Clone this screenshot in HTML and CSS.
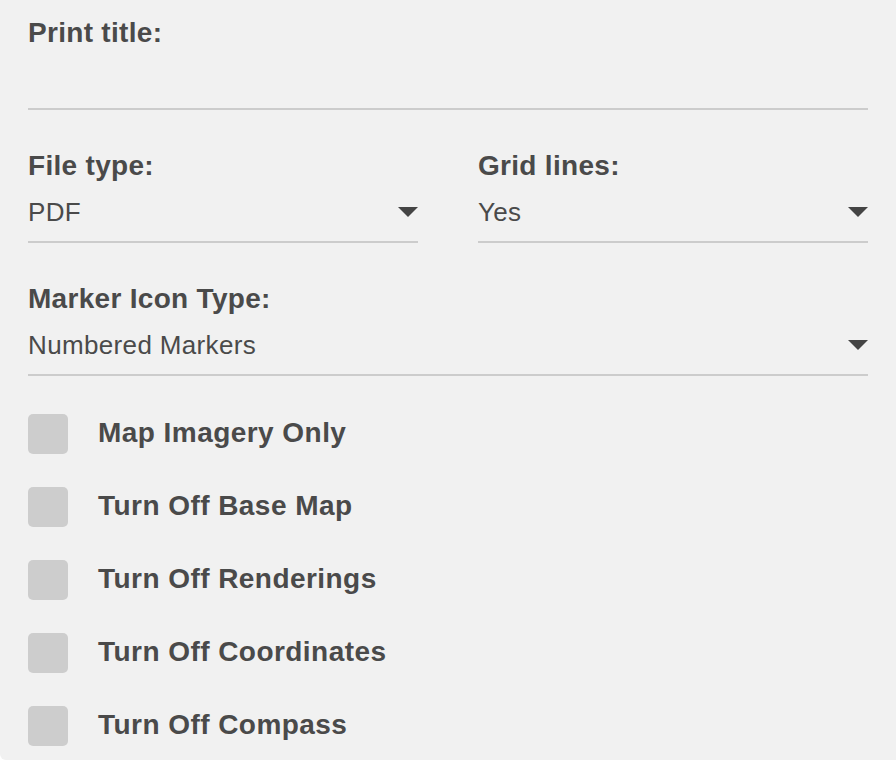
FILE: index.html
```html
<!DOCTYPE html>
<html lang="en">
<head>
<meta charset="utf-8">
<title>Print options</title>
<link rel="stylesheet" href="styles.css">
</head>
<body>
<div class="panel">
  <div class="field">
    <div class="label">Print title:</div>
    <div class="input"></div>
  </div>
  <div class="row">
    <div class="field">
      <div class="label">File type:</div>
      <div class="select"><span class="value">PDF</span><span class="caret"></span></div>
    </div>
    <div class="field">
      <div class="label">Grid lines:</div>
      <div class="select"><span class="value">Yes</span><span class="caret"></span></div>
    </div>
  </div>
  <div class="field">
    <div class="label">Marker Icon Type:</div>
    <div class="select"><span class="value">Numbered Markers</span><span class="caret"></span></div>
  </div>
  <div class="checks">
    <div class="check"><span class="box"></span><span class="check-label">Map Imagery Only</span></div>
    <div class="check"><span class="box"></span><span class="check-label">Turn Off Base Map</span></div>
    <div class="check"><span class="box"></span><span class="check-label">Turn Off Renderings</span></div>
    <div class="check"><span class="box"></span><span class="check-label">Turn Off Coordinates</span></div>
    <div class="check"><span class="box"></span><span class="check-label">Turn Off Compass</span></div>
  </div>
</div>
</body>
</html>
```
FILE: styles.css
```css
html, body {
  margin: 0;
  padding: 0;
  background: #ffffff;
}
body {
  font-family: "Liberation Sans", Arial, Helvetica, sans-serif;
  color: #4a4a4a;
}
.panel {
  box-sizing: border-box;
  width: 896px;
  height: 760px;
  background: #f1f1f1;
  padding: 17px 28px 0;
  border-bottom-left-radius: 6px;
  display: flex;
  flex-direction: column;
  gap: 40px;
}
.row {
  display: grid;
  grid-template-columns: 1fr 1fr;
  column-gap: 60px;
}
.label {
  font-size: 28px;
  font-weight: bold;
  line-height: 32px;
  letter-spacing: 0.3px;
}
.input,
.select {
  box-sizing: border-box;
  height: 61px;
  padding: 15px 0 14px;
  border-bottom: 2px solid #cccccc;
  font-size: 26px;
  line-height: 30px;
  letter-spacing: 0.35px;
}
.select {
  display: flex;
  justify-content: space-between;
  align-items: flex-start;
}
.caret {
  width: 0;
  height: 0;
  margin-top: 10px;
  border-left: 10px solid transparent;
  border-right: 10px solid transparent;
  border-top: 10px solid #444444;
}
.checks {
  display: flex;
  flex-direction: column;
  gap: 33px;
  margin-top: -2px;
}
.check {
  display: flex;
  align-items: center;
  gap: 30px;
  height: 40px;
}
.box {
  width: 40px;
  height: 40px;
  border-radius: 5px;
  background: #cdcdcd;
  flex: none;
}
.check-label {
  font-size: 28px;
  font-weight: bold;
  line-height: 38px;
  letter-spacing: 0.45px;
  margin-top: -2px;
}
```
